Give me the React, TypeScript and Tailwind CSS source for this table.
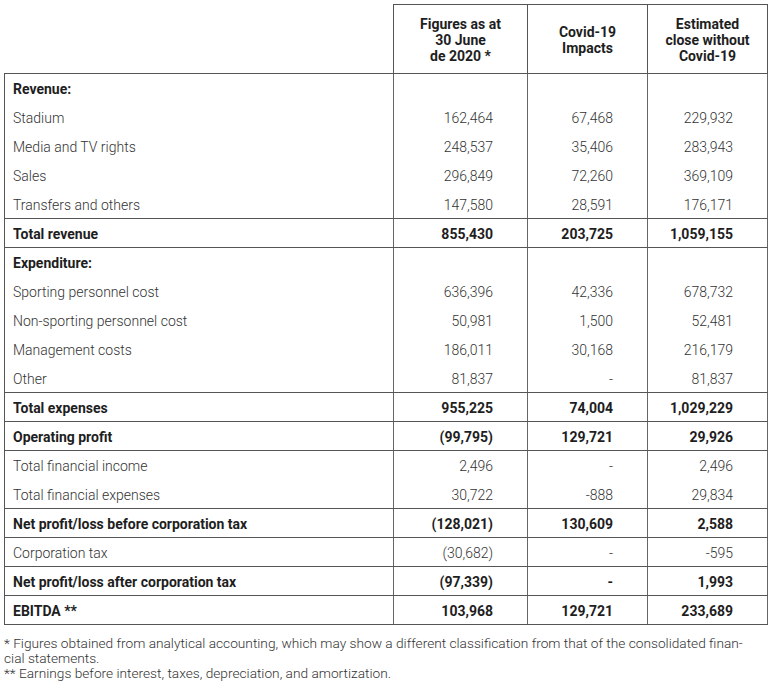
import React from 'react';

type Row = {
  label: string;
  values?: [string, string, string];
  bold?: boolean;
  line?: boolean;
};

const rows: Row[] = [
  { label: 'Revenue:', bold: true, line: true },
  { label: 'Stadium', values: ['162,464', '67,468', '229,932'] },
  { label: 'Media and TV rights', values: ['248,537', '35,406', '283,943'] },
  { label: 'Sales', values: ['296,849', '72,260', '369,109'] },
  { label: 'Transfers and others', values: ['147,580', '28,591', '176,171'] },
  { label: 'Total revenue', values: ['855,430', '203,725', '1,059,155'], bold: true, line: true },
  { label: 'Expenditure:', bold: true, line: true },
  { label: 'Sporting personnel cost', values: ['636,396', '42,336', '678,732'] },
  { label: 'Non-sporting personnel cost', values: ['50,981', '1,500', '52,481'] },
  { label: 'Management costs', values: ['186,011', '30,168', '216,179'] },
  { label: 'Other', values: ['81,837', '-', '81,837'] },
  { label: 'Total expenses', values: ['955,225', '74,004', '1,029,229'], bold: true, line: true },
  { label: 'Operating profit', values: ['(99,795)', '129,721', '29,926'], bold: true, line: true },
  { label: 'Total financial income', values: ['2,496', '-', '2,496'], line: true },
  { label: 'Total financial expenses', values: ['30,722', '-888', '29,834'] },
  { label: 'Net profit/loss before corporation tax', values: ['(128,021)', '130,609', '2,588'], bold: true, line: true },
  { label: 'Corporation tax', values: ['(30,682)', '-', '-595'], line: true },
  { label: 'Net profit/loss after corporation tax', values: ['(97,339)', '-', '1,993'], bold: true, line: true },
  { label: 'EBITDA **', values: ['103,968', '129,721', '233,689'], bold: true, line: true },
];

const HeaderCell = ({ lines, last }: { lines: string[]; last?: boolean }) => (
  <div
    className={`flex-1 flex flex-col items-center justify-center pt-[2px] border-t border-l border-[#555] text-center text-[14px] leading-[16px] font-bold text-[#1e1e1e] ${
      last ? 'border-r' : ''
    }`}
  >
    {lines.map((l) => (
      <span key={l}>{l}</span>
    ))}
  </div>
);

export default function App() {
  return (
    <div
      className="w-[769px] h-[686px] bg-white pl-[4px] pt-[4px] text-[#333]"
      style={{ fontFamily: 'Roboto, "Liberation Sans", sans-serif' }}
    >
      {/* Header */}
      <div className="flex h-[69px]">
        <div className="w-[389px]" />
        <div className="w-[134px] flex">
          <HeaderCell lines={['Figures as at', '30 June', 'de 2020 *']} />
        </div>
        <div className="w-[120px] flex">
          <HeaderCell lines={['Covid-19', 'Impacts']} />
        </div>
        <div className="w-[121px] flex">
          <HeaderCell lines={['Estimated', 'close without', 'Covid-19']} last />
        </div>
      </div>

      {/* Body */}
      <div className="w-[764px] border-b border-[#555]">
        {rows.map((r) => (
          <div
            key={r.label}
            className={`flex h-[29px] text-[14px] ${r.line ? 'border-t border-[#555]' : ''} ${
              r.bold ? 'font-bold text-[#1e1e1e]' : 'font-light text-[#333]'
            }`}
          >
            <div className="w-[389px] pt-[3px] flex items-center border-l border-[#555] pl-[8px]">{r.label}</div>
            <div className="w-[134px] pt-[3px] flex items-center justify-end border-l border-[#666] pr-[34px]">
              {r.values?.[0]}
            </div>
            <div className="w-[120px] pt-[3px] flex items-center justify-end border-l border-[#666] pr-[34px]">
              {r.values?.[1]}
            </div>
            <div className="w-[121px] pt-[3px] flex items-center justify-end border-l border-r border-[#666] pr-[34px]">
              {r.values?.[2]}
            </div>
          </div>
        ))}
      </div>

      {/* Notes */}
      <div className="mt-[11px] text-[13.7px] leading-[15px] font-light text-[#333]">
        <p>
          * Figures obtained from analytical accounting, which may show a different classification from that of the consolidated finan-
          <br />
          cial statements.
        </p>
        <p>** Earnings before interest, taxes, depreciation, and amortization.</p>
      </div>
    </div>
  );
}
